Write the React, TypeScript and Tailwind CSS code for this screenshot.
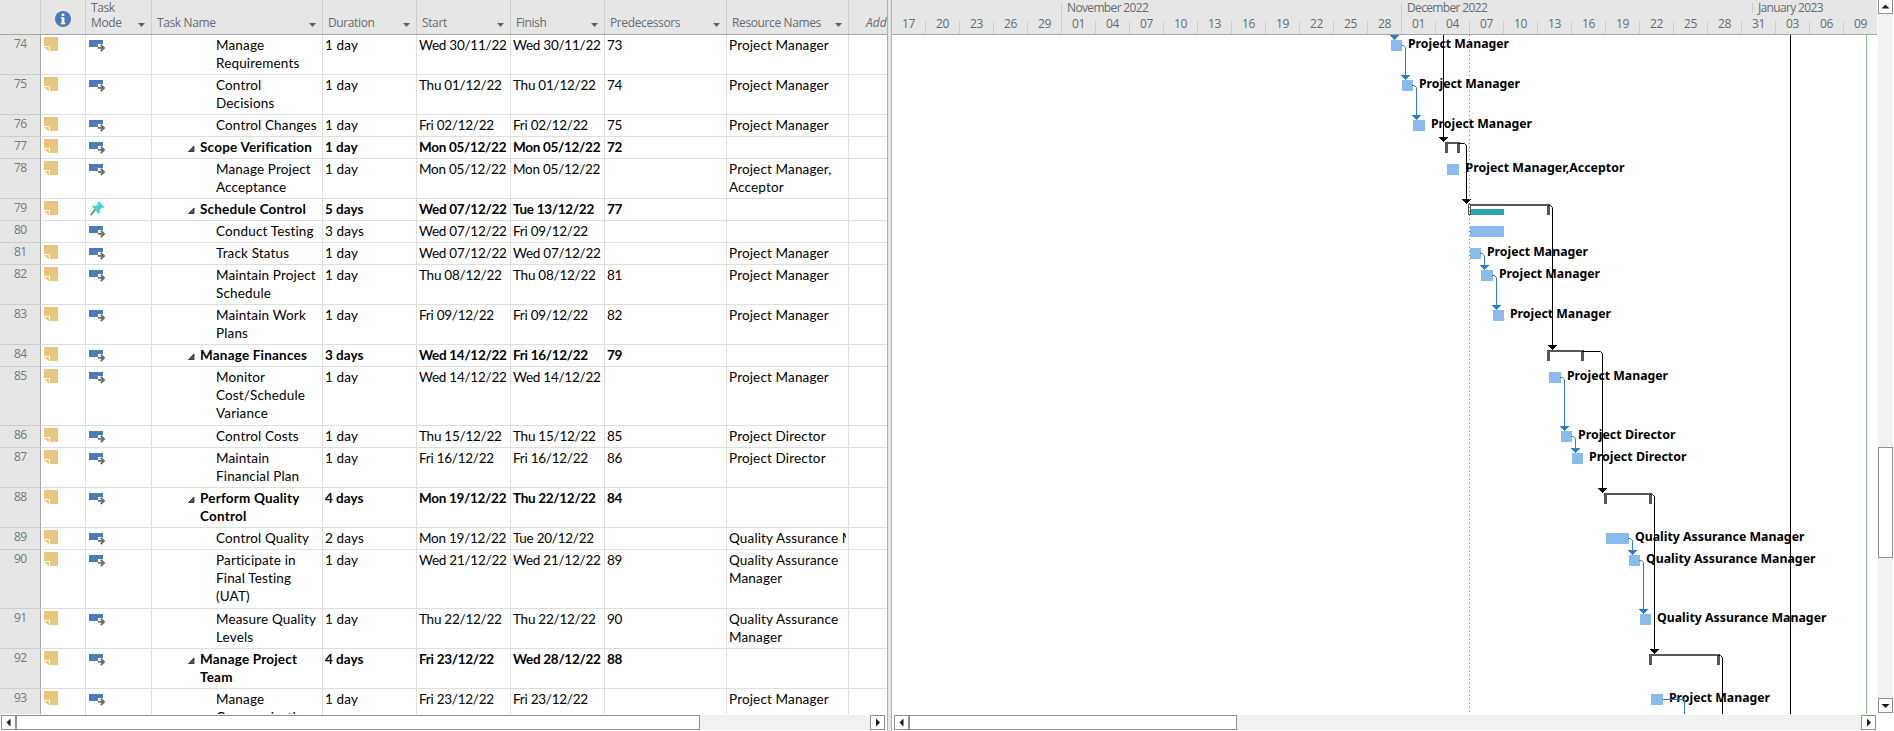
import React from "react";

type Task = {
  id: number;
  name: string[];
  duration: string;
  start: string;
  finish: string;
  pred?: string;
  resource?: string[];
  summary?: boolean;
  pinned?: boolean;
  noNote?: boolean;
};

const PM = ["Project Manager"];
const PD = ["Project Director"];

const tasks: Task[] = [
  { id: 74, name: ["Manage", "Requirements"], duration: "1 day", start: "Wed 30/11/22", finish: "Wed 30/11/22", pred: "73", resource: PM },
  { id: 75, name: ["Control", "Decisions"], duration: "1 day", start: "Thu 01/12/22", finish: "Thu 01/12/22", pred: "74", resource: PM },
  { id: 76, name: ["Control Changes"], duration: "1 day", start: "Fri 02/12/22", finish: "Fri 02/12/22", pred: "75", resource: PM },
  { id: 77, name: ["Scope Verification"], duration: "1 day", start: "Mon 05/12/22", finish: "Mon 05/12/22", pred: "72", summary: true },
  { id: 78, name: ["Manage Project", "Acceptance"], duration: "1 day", start: "Mon 05/12/22", finish: "Mon 05/12/22", resource: ["Project Manager,", "Acceptor"] },
  { id: 79, name: ["Schedule Control"], duration: "5 days", start: "Wed 07/12/22", finish: "Tue 13/12/22", pred: "77", summary: true, pinned: true },
  { id: 80, name: ["Conduct Testing"], duration: "3 days", start: "Wed 07/12/22", finish: "Fri 09/12/22", noNote: true },
  { id: 81, name: ["Track Status"], duration: "1 day", start: "Wed 07/12/22", finish: "Wed 07/12/22", resource: PM },
  { id: 82, name: ["Maintain Project", "Schedule"], duration: "1 day", start: "Thu 08/12/22", finish: "Thu 08/12/22", pred: "81", resource: PM },
  { id: 83, name: ["Maintain Work", "Plans"], duration: "1 day", start: "Fri 09/12/22", finish: "Fri 09/12/22", pred: "82", resource: PM },
  { id: 84, name: ["Manage Finances"], duration: "3 days", start: "Wed 14/12/22", finish: "Fri 16/12/22", pred: "79", summary: true },
  { id: 85, name: ["Monitor", "Cost/Schedule", "Variance"], duration: "1 day", start: "Wed 14/12/22", finish: "Wed 14/12/22", resource: PM },
  { id: 86, name: ["Control Costs"], duration: "1 day", start: "Thu 15/12/22", finish: "Thu 15/12/22", pred: "85", resource: PD },
  { id: 87, name: ["Maintain", "Financial Plan"], duration: "1 day", start: "Fri 16/12/22", finish: "Fri 16/12/22", pred: "86", resource: PD },
  { id: 88, name: ["Perform Quality", "Control"], duration: "4 days", start: "Mon 19/12/22", finish: "Thu 22/12/22", pred: "84", summary: true },
  { id: 89, name: ["Control Quality"], duration: "2 days", start: "Mon 19/12/22", finish: "Tue 20/12/22", resource: ["Quality Assurance Manager"] },
  { id: 90, name: ["Participate in", "Final Testing", "(UAT)"], duration: "1 day", start: "Wed 21/12/22", finish: "Wed 21/12/22", pred: "89", resource: ["Quality Assurance", "Manager"] },
  { id: 91, name: ["Measure Quality", "Levels"], duration: "1 day", start: "Thu 22/12/22", finish: "Thu 22/12/22", pred: "90", resource: ["Quality Assurance", "Manager"] },
  { id: 92, name: ["Manage Project", "Team"], duration: "4 days", start: "Fri 23/12/22", finish: "Wed 28/12/22", pred: "88", summary: true },
  { id: 93, name: ["Manage", "Communications"], duration: "1 day", start: "Fri 23/12/22", finish: "Fri 23/12/22", resource: PM },
];

const rowHeights: Record<number, string> = { 1: "h-[22px]", 2: "h-10", 3: "h-[59px]" };

function NoteIcon() {
  return (
    <svg className="block" width="14" height="14" viewBox="0 0 14 14">
      <path d="M0 0H14V14H6V9H0Z" fill="#e8c580" shapeRendering="crispEdges" />
      <path d="M0 10H5V14.5Z" fill="#e8c580" />
    </svg>
  );
}

function AutoIcon() {
  return (
    <svg className="block" width="17" height="12" viewBox="0 0 17 12">
      <path d="M0 0H14V4H9V7H0Z" fill="#4a7db5" shapeRendering="crispEdges" />
      <path d="M9 7.9H14.6M11.8 4.8L15 7.9L11.8 11" fill="none" stroke="#6e6e6e" strokeWidth="1.9" />
    </svg>
  );
}

function PinIcon() {
  return (
    <svg className="block" width="15" height="15" viewBox="0 0 15 15">
      <path d="M5.6 8.2L0.6 14.2" stroke="#777" strokeWidth="1.7" />
      <path d="M8.6 0.3L14.2 5.9L13.2 6.9L11.6 6.6L9.6 9.2L9.9 12L8.8 13L1.9 5.6L3 4.6L5.8 5L8.1 2.9L7.6 1.3Z" fill="#45d0d3" />
    </svg>
  );
}

function DropArrow() {
  return (
    <svg className="block shrink-0" width="7" height="4" viewBox="0 0 7 4">
      <path d="M0 0H7L3.5 4Z" fill="#5f6368" />
    </svg>
  );
}

function HeadCell({ width, children }: { width: string; children: React.ReactNode }) {
  return (
    <div className={`flex h-full shrink-0 items-end justify-between border-r border-[#cdcdcd] pr-1.5 pb-[7px] pl-[5px] ${width}`}>
      <span className="-mb-[3px] leading-[15px] whitespace-pre">{children}</span>
      <DropArrow />
    </div>
  );
}

function Cell({ width, children }: { width: string; children?: React.ReactNode }) {
  return <div className={`shrink-0 overflow-hidden border-r border-b border-[#dedede] pt-px pl-[2px] whitespace-pre ${width}`}>{children}</div>;
}

function Lines({ items }: { items?: string[] }) {
  return (
    <>
      {(items ?? []).map((t) => (
        <div key={t}>{t}</div>
      ))}
    </>
  );
}

function TaskRow({ t }: { t: Task }) {
  const dateWidth = t.summary ? "w-[94px] tracking-[-0.3px]" : "w-[94px] tracking-[-0.25px]";
  return (
    <div
      className={`flex shrink-0 text-[13.5px] leading-[18px] text-black ${rowHeights[t.name.length]} ${t.summary ? "font-bold tracking-[0.2px]" : "tracking-[0.15px]"}`}
    >
      <div className="w-[41px] shrink-0 border-r border-b border-r-[#a6a6a6] border-b-[#cdcdcd] bg-[#e6e6e6] pl-3.5 font-['Open_Sans',sans-serif] text-[12px] leading-[17px] font-normal tracking-[-0.7px] text-[#767676]">
        {t.id}
      </div>
      <div className="w-[45px] shrink-0 border-r border-b border-[#dedede] pt-0.5 pl-[3px]">{!t.noNote && <NoteIcon />}</div>
      <div className="w-[66px] shrink-0 border-r border-b border-[#dedede]">
        {t.pinned ? (
          <div className="pt-0.5 pl-1">
            <PinIcon />
          </div>
        ) : (
          <div className="pt-[5px] pl-[3px]">
            <AutoIcon />
          </div>
        )}
      </div>
      <div className={`flex w-[171px] shrink-0 border-r border-b border-[#dedede] pt-px whitespace-pre ${t.summary ? "pl-9" : "pl-16"}`}>
        {t.summary && (
          <svg className="mt-2 mr-[5px] block shrink-0" width="7" height="6" viewBox="0 0 7 6">
            <path d="M6 0V5.5H0.5Z" fill="#555" stroke="#222" strokeWidth="0.8" />
          </svg>
        )}
        <div>
          <Lines items={t.name} />
        </div>
      </div>
      <Cell width={t.summary ? "w-[94px] tracking-[0px]" : "w-[94px]"}>{t.duration}</Cell>
      <Cell width={dateWidth}>{t.start}</Cell>
      <Cell width={dateWidth}>{t.finish}</Cell>
      <Cell width="w-[122px] tracking-[-0.4px]">{t.pred}</Cell>
      <div className="w-[122px] shrink-0 border-r border-b border-[#dedede] pt-px pr-0.5 pl-[2px]">
        <div className="overflow-hidden whitespace-pre">
          <Lines items={t.resource} />
        </div>
      </div>
      <div className="grow border-b border-[#dedede]" />
    </div>
  );
}

function ScrollButton({ d }: { d: string }) {
  return (
    <div className="flex size-[15px] shrink-0 items-center justify-center border border-[#8f8f8f] bg-white">
      <svg width="9" height="9" viewBox="0 0 9 9" className="block">
        <path d={d} fill="#1a1a1a" />
      </svg>
    </div>
  );
}

const LEFT = "M6.5 0.5V8.5L2.5 4.5Z";
const RIGHT = "M3 0.5V8.5L7 4.5Z";
const UP = "M0.5 6.5H8.5L4.5 2.5Z";
const DOWN = "M0.5 3H8.5L4.5 7Z";

const days = "17 20 23 26 29 01 04 07 10 13 16 19 22 25 28 01 04 07 10 13 16 19 22 25 28 31 03 06 09".split(" ");

const bars = [
  [1391, 40, 11], [1402, 80, 11], [1413, 120, 12], [1447, 164, 12], [1470, 226, 34], [1470, 248, 11], [1481, 270, 12],
  [1493, 310, 11], [1549, 372, 12], [1561, 431, 11], [1572, 453, 11], [1606, 533, 23], [1629, 555, 11], [1640, 614, 11], [1651, 694, 12],
];

const labels: [number, number, string, number][] = [
  [1408, 48, "Project Manager", 101],
  [1419, 88, "Project Manager", 101],
  [1431, 128, "Project Manager", 101],
  [1465.5, 172, "Project Manager,Acceptor", 159],
  [1487, 256, "Project Manager", 101],
  [1499, 278, "Project Manager", 101],
  [1510, 318, "Project Manager", 101],
  [1567, 380, "Project Manager", 101],
  [1578, 439, "Project Director", 97.5],
  [1589, 461, "Project Director", 97.5],
  [1635, 541, "Quality Assurance Manager", 169.5],
  [1646, 563, "Quality Assurance Manager", 169.5],
  [1657, 622, "Quality Assurance Manager", 169.5],
  [1669, 702, "Project Manager", 101],
];

const brackets = [
  [1445, 142, 1460], [1547, 350, 1584], [1604, 493, 1652], [1649, 654, 1720],
];

// startX, startY, dropX, endY
const blueLinks = [
  [1401, 45.5, 1405.5, 80], [1412, 85.5, 1416.5, 120], [1480, 253.5, 1484.5, 270], [1492, 275.5, 1496.5, 310],
  [1560, 377.5, 1564.5, 431], [1571, 436.5, 1575.5, 453], [1628, 538.5, 1632.5, 555], [1639, 560.5, 1643.5, 614],
];
const blackLinks = [
  [1458, 143.5, 1466.5, 204], [1548, 205.5, 1552.5, 350], [1582, 351.5, 1602.5, 493], [1650, 494.5, 1654.5, 654],
];

function Arrow({ x, y, color }: { x: number; y: number; color: string }) {
  return <path d={`M${x - 4.5} ${y - 5}h9v1h-1v1h-1v1h-1v1h-1v1h-1v-1h-1v-1h-1v-1h-1v-1h-1z`} fill={color} shapeRendering="crispEdges" />;
}

function Link({ l, color }: { l: number[]; color: string }) {
  const [x, y, dx, ey] = l;
  return (
    <>
      <path d={`M${x} ${y}H${dx - 2}L${dx} ${y + 2}V${ey - 3}`} fill="none" stroke={color} />
      <Arrow x={dx} y={ey} color={color} />
    </>
  );
}

function Chart() {
  return (
    <svg className="block" width="985" height="679" viewBox="892 35 985 679">
      {bars.map(([x, y, w]) => (
        <rect key={y} x={x} y={y} width={w} height="11" fill="#8bbaec" />
      ))}
      <g fontFamily="'Noto Sans','Open Sans',sans-serif" fontSize="13" fontWeight="700" fill="#000">
        {labels.map(([x, y, s, w]) => (
          <text key={y} x={x} y={y} textLength={w} lengthAdjust="spacingAndGlyphs">
            {s}
          </text>
        ))}
      </g>
      {brackets.map(([a, y, b]) => (
        <path key={y} d={`M${a} ${y}H${b}V${y + 11}H${b - 3}V${y + 2}H${a + 3}V${y + 11}H${a}Z`} fill="#565656" />
      ))}
      <path d="M1468 204H1550V215H1547V206H1468Z" fill="#565656" />
      <rect x="1468.5" y="204.5" width="2" height="10" fill="#fff" stroke="#565656" />
      <rect x="1471" y="209" width="33" height="6" fill="#2ca5ad" />
      {blueLinks.map((l) => (
        <Link key={l[3]} l={l} color="#2b7cd3" />
      ))}
      <Arrow x={1394.5} y={40} color="#2b7cd3" />
      <path d="M1663 699.5H1684.5V714" fill="none" stroke="#2b7cd3" />
      {blackLinks.map((l) => (
        <Link key={l[3]} l={l} color="#000" />
      ))}
      <path d="M1443.5 35V139M1718 655.5H1720.5L1722.5 657.5V714M1790.5 35V714" fill="none" stroke="#000" />
      <Arrow x={1443.5} y={142} color="#000" />
      <path d="M1469.5 35V714" stroke="#777" strokeDasharray="1 3" />
      <path d="M1866.5 35V714" stroke="#8cc08a" />
    </svg>
  );
}

export default function App() {
  return (
    <div className="flex h-[731px] w-[1894px] overflow-hidden bg-white font-['Lato',sans-serif]">
      <div className="flex w-[887px] shrink-0 flex-col overflow-hidden">
        <div className="flex h-[35px] shrink-0 overflow-hidden border-b border-[#a6a6a6] bg-[#e6e6e6] font-['Open_Sans',sans-serif] text-[12px] tracking-[-0.38px] text-[#666a70]">
          <div className="w-[41px] shrink-0 border-r border-[#cdcdcd]" />
          <div className="flex w-[45px] shrink-0 justify-center border-r border-[#cdcdcd] pt-[11px]">
            <svg width="16" height="16" viewBox="0 0 16 16" className="block">
              <circle cx="8" cy="8" r="8" fill="#4a7db5" />
              <path d="M6.7 2.5H9.3V5H6.7ZM5.9 6.2H9.4V11.8H10.3V13.2H5.7V11.8H6.7V7.6H5.9Z" fill="#fff" />
            </svg>
          </div>
          <HeadCell width="w-[66px]">{"Task\nMode"}</HeadCell>
          <HeadCell width="w-[171px]">Task Name</HeadCell>
          <HeadCell width="w-[94px]">Duration</HeadCell>
          <HeadCell width="w-[94px]">Start</HeadCell>
          <HeadCell width="w-[94px]">Finish</HeadCell>
          <HeadCell width="w-[122px]">Predecessors</HeadCell>
          <HeadCell width="w-[122px]">Resource Names</HeadCell>
          <div className="flex items-end pb-1 pl-[17px] leading-[15px] tracking-[0px] italic">Add</div>
        </div>
        <div className="flex h-[679px] shrink-0 flex-col overflow-hidden">
          {tasks.map((t) => (
            <TaskRow key={t.id} t={t} />
          ))}
        </div>
        <div className="mt-px mr-0.5 ml-px flex h-[15px] shrink-0 bg-[#f1f1f1]">
          <ScrollButton d={LEFT} />
          <div className="w-[684px] border border-[#8f8f8f] bg-white" />
          <div className="grow" />
          <ScrollButton d={RIGHT} />
        </div>
      </div>

      <div className="w-[5px] shrink-0 border-x border-[#b0b0b0] bg-[#e6e6e6]" />

      <div className="flex w-[985px] shrink-0 flex-col">
        <div className="h-[35px] shrink-0 border-b border-[#a6a6a6] bg-[#e6e6e6] font-['Open_Sans',sans-serif] text-[12px] text-[#666a70]">
          <div className="flex h-[21px] pt-[3px] leading-[9px] tracking-[-0.65px]">
            <div className="w-[169px]" />
            <div className="w-[340px] border-l border-[#cdcdcd] pl-[5px]">November 2022</div>
            <div className="w-[351px] border-l border-[#cdcdcd] pl-[5px]">December 2022</div>
            <div className="h-[9px] border-l border-[#cdcdcd] pl-[5px]">January 2023</div>
          </div>
          <div className="flex h-[13px] leading-[5px] tracking-[-0.4px]">
            {days.map((d, i) => (
              <div key={i} className={`shrink-0 pl-2.5 ${i === 0 ? "w-[33px]" : "w-[34px] border-l border-[#cdcdcd]"}`}>
                {d}
              </div>
            ))}
          </div>
        </div>
        <Chart />
        <div className="mt-px mr-px ml-0.5 flex h-[15px] shrink-0 bg-[#f1f1f1]">
          <ScrollButton d={LEFT} />
          <div className="w-[328px] border border-[#8f8f8f] bg-white" />
          <div className="grow" />
          <ScrollButton d={RIGHT} />
        </div>
      </div>

      <div className="-mt-px ml-px flex h-[714px] w-[15px] shrink-0 flex-col bg-[#f1f1f1]">
        <ScrollButton d={UP} />
        <div className="h-[433px]" />
        <div className="h-[111px] border border-[#8f8f8f] bg-white" />
        <div className="grow" />
        <ScrollButton d={DOWN} />
      </div>
    </div>
  );
}
